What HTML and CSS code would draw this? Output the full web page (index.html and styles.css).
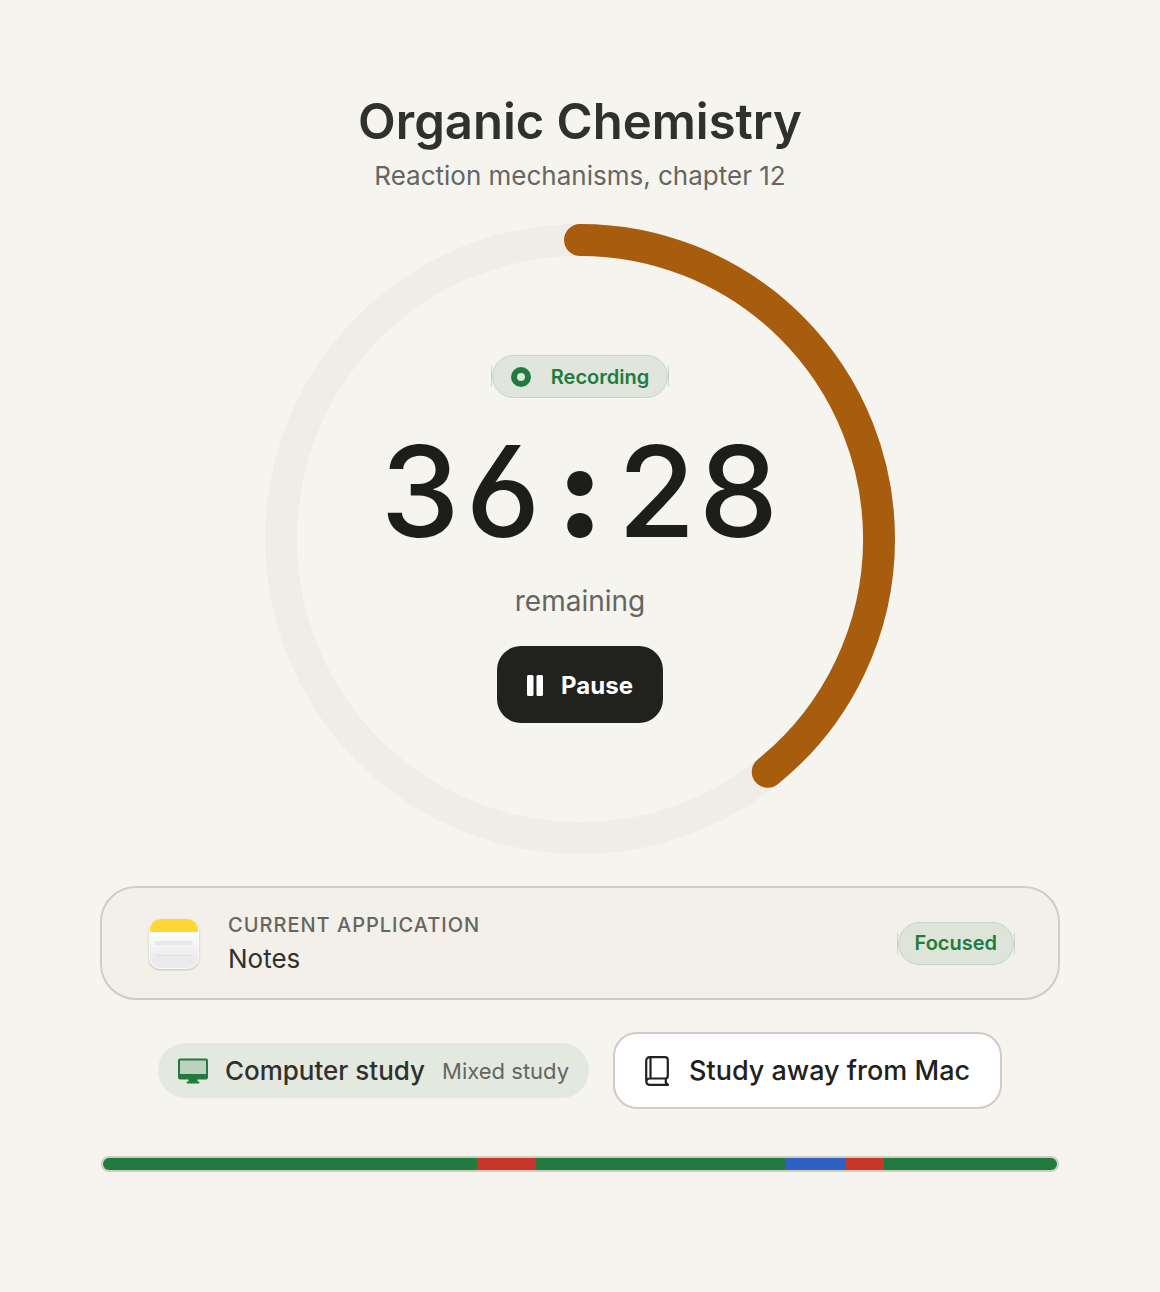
FILE: index.html
```html
<!DOCTYPE html>
<html lang="en">
<head>
    <meta charset="UTF-8">
    <meta name="viewport" content="width=device-width, initial-scale=1.0">
    <title>Organic Chemistry</title>
    <link rel="stylesheet" href="styles.css">
</head>
<body>

    <main class="session">
        <header class="heading">
            <h1>Organic Chemistry</h1>
            <p>Reaction mechanisms, chapter 12</p>
        </header>

        <section class="timer">
            <svg class="ring" viewBox="0 0 632 632" aria-hidden="true">
                <circle class="ring-track" cx="316" cy="316" r="300"/>
                <circle class="ring-progress" cx="316" cy="316" r="300" pathLength="1000" stroke-dasharray="392 1000" transform="rotate(-90 316 316)"/>
            </svg>
            <div class="timer-content">
                <span class="badge">
                    <svg class="record-icon" viewBox="0 0 20 20" aria-hidden="true">
                        <circle cx="10" cy="10" r="7"/>
                    </svg>
                    Recording
                </span>
                <div class="time">36<span class="colon">:</span>28</div>
                <div class="remaining">remaining</div>
                <button class="pause" type="button">
                    <svg class="pause-icon" viewBox="0 0 16 22" aria-hidden="true">
                        <rect x="0" y="0" width="6.500" height="21" rx="1.5"/>
                        <rect x="9.500" y="0" width="6.500" height="21" rx="1.5"/>
                    </svg>
                    Pause
                </button>
            </div>
        </section>

        <section class="app-card">
            <svg class="notes-icon" viewBox="0 -1 56 56" aria-hidden="true">
                <defs>
                    <linearGradient id="paper" x1="0" y1="0" x2="0" y2="1">
                        <stop offset="0.3" stop-color="#fcfcfb"/>
                        <stop offset="0.8" stop-color="#ebebeb"/>
                    </linearGradient>
                    <clipPath id="sheet">
                        <rect x="4" y="3" width="48" height="49" rx="11"/>
                    </clipPath>
                </defs>
                <rect class="notes-edge" x="3" y="3" width="50" height="50" rx="12"/>
                <g clip-path="url(#sheet)">
                    <rect x="4" y="3" width="48" height="49" fill="url(#paper)"/>
                    <rect x="4" y="3" width="48" height="13" fill="#ffd735"/>
                </g>
                <rect x="9" y="25" width="38" height="4" rx="1" fill="#e8e8e8"/>
                <rect x="10" y="39" width="36" height="1" fill="#dfdfdf"/>
            </svg>
            <div class="app-info">
                <div class="app-label">CURRENT APPLICATION</div>
                <div class="app-name">Notes</div>
            </div>
            <span class="badge badge-focused">Focused</span>
        </section>

        <div class="modes">
            <div class="mode-pill">
                <svg class="monitor-icon" viewBox="0 0 30 26" aria-hidden="true">
                    <path fill="#217b3e" d="M2 0.5h26a2 2 0 0 1 2 2v17a2 2 0 0 1-2 2h-8.500v2h1a1 1 0 0 1 0 2H9.500a1 1 0 0 1 0-2h1v-2H2a2 2 0 0 1-2-2v-17a2 2 0 0 1 2-2z"/>
                    <rect x="2" y="2.500" width="26" height="13.500" fill="#bcd1bf"/>
                </svg>
                <strong>Computer study</strong>
                <span class="mode-kind">Mixed study</span>
            </div>
            <button class="away" type="button">
                <svg class="book-icon" viewBox="0 0 24 30" aria-hidden="true">
                    <path d="M1.200 25V4.500A3.300 3.300 0 0 1 4.500 1.200H20a2.800 2.800 0 0 1 2.800 2.800v16a2.500 2.500 0 0 1-2.500 2.500H4.500a3 3 0 0 0 0 6.300H23M20.800 22.500v4l2 2.300M5.500 1.200v21.300"/>
                </svg>
                Study away from Mac
            </button>
        </div>

        <div class="timeline">
            <span class="focused" style="flex-grow: 374"></span>
            <span class="distracted" style="flex-grow: 59"></span>
            <span class="focused" style="flex-grow: 249"></span>
            <span class="away-time" style="flex-grow: 61"></span>
            <span class="distracted" style="flex-grow: 38"></span>
            <span class="focused" style="flex-grow: 173"></span>
        </div>
    </main>

</body>
</html>
```
FILE: styles.css
```css
* {
    box-sizing: border-box;
}
body {
    margin: 0;
    background: #f6f4ef;
    color: #30302d;
    font-family: Inter, "Liberation Sans", sans-serif;
}
h1, p {
    margin: 0;
}
button {
    font-family: inherit;
    cursor: pointer;
}
.session {
    display: flex;
    flex-direction: column;
    gap: 32px;
    max-width: 1160px;
    margin: 0 auto;
    padding: 92px 100px;
}

/* heading */
.heading {
    display: flex;
    flex-direction: column;
    gap: 8px;
    text-align: center;
}
.heading h1 {
    font-size: 49px;
    font-weight: 600;
    line-height: 60px;
}
.heading p {
    color: #656561;
    font-size: 26px;
    line-height: 32px;
}

/* timer */
.timer {
    display: grid;
    justify-content: center;
    grid-template-columns: minmax(0, 630px);
}
.ring, .timer-content {
    grid-area: 1 / 1;
}
.ring {
    display: block;
    width: 100%;
}
.ring circle {
    fill: none;
    stroke-width: 32;
}
.ring .ring-track {
    stroke: #f0ede7;
}
.ring .ring-progress {
    stroke: #a75c0e;
    stroke-linecap: round;
}
.timer-content {
    display: flex;
    flex-direction: column;
    align-items: center;
    justify-content: center;
    gap: 28px;
}
.badge {
    position: relative;
    display: flex;
    align-items: center;
    gap: 20px;
    height: 43px;
    padding: 0 18px;
    border: 1px solid #c4d6c7;
    border-radius: 22px;
    background: #e0e6dc;
    color: #217b3e;
    font-size: 20px;
    font-weight: 600;
}
/* short side ticks */
.badge::before {
    content: "";
    position: absolute;
    inset: 10px -2px;
    border: solid #c9d8ca;
    border-width: 0 1px;
}
.badge-focused {
    padding: 0 16px;
    background: #dee4d8;
}
.record-icon {
    width: 20px;
    height: 20px;
    fill: none;
    stroke: #217b3e;
    stroke-width: 6;
}
.time {
    color: #1d1d1b;
    font-size: 126px;
    font-weight: 500;
    line-height: 130px;
    font-feature-settings: "tnum", "cv03";
}
.colon {
    display: inline-block;
    width: 72px;
    text-align: center;
    font-weight: 900;
}
.remaining {
    color: #656561;
    font-size: 28px;
    line-height: 34px;
}
.pause {
    display: flex;
    align-items: center;
    gap: 18px;
    height: 77px;
    padding: 2px 30px 0;
    border: none;
    border-radius: 24px;
    background: #21211d;
    color: white;
    font-size: 24px;
    font-weight: 700;
}
.pause-icon {
    width: 16px;
    height: 22px;
    fill: white;
}

/* current application */
.app-card {
    display: flex;
    align-items: center;
    height: 114px;
    padding: 0 44px;
    border: 2px solid #d1cbc0;
    border-radius: 36px;
    background: #f3f0ea;
}
.notes-icon {
    width: 56px;
    height: 56px;
    margin-right: 26px;
}
.notes-edge {
    fill: #fafaf8;
    filter: drop-shadow(0 1px 1px rgba(0, 0, 0, 0.2));
}
.app-info {
    flex: 1;
}
.app-label {
    color: #656561;
    font-size: 20px;
    font-weight: 500;
    line-height: 32px;
    letter-spacing: 1px;
}
.app-name {
    font-size: 26px;
    line-height: 36px;
}

/* modes */
.modes {
    display: flex;
    align-items: center;
    justify-content: center;
    gap: 24px;
}
.mode-pill {
    display: flex;
    align-items: center;
    height: 55px;
    padding: 0 20px;
    border-radius: 28px;
    background: #e4e9e0;
    font-size: 26px;
}
.mode-pill strong {
    margin: 0 17px;
    font-weight: 500;
}
.mode-kind {
    color: #656561;
    font-size: 22px;
}
.monitor-icon {
    width: 30px;
    height: 26px;
}
.away {
    display: flex;
    align-items: center;
    gap: 20px;
    height: 77px;
    padding: 0 30px;
    border: 2px solid #d1cbc0;
    border-radius: 24px;
    background: white;
    color: #21211d;
    font-size: 27px;
    font-weight: 500;
}
.book-icon {
    width: 24px;
    height: 30px;
    fill: none;
    stroke: #21211d;
    stroke-width: 2.2;
    stroke-linecap: round;
}

/* timeline */
.timeline {
    display: flex;
    height: 16px;
    margin: 15px 1px 0;
    overflow: hidden;
    border: 2px solid #d1cbc0;
    border-radius: 8px;
}
.focused {
    background: #217b3e;
}
.distracted {
    background: #c93529;
}
.away-time {
    background: #2f61c5;
}
```
